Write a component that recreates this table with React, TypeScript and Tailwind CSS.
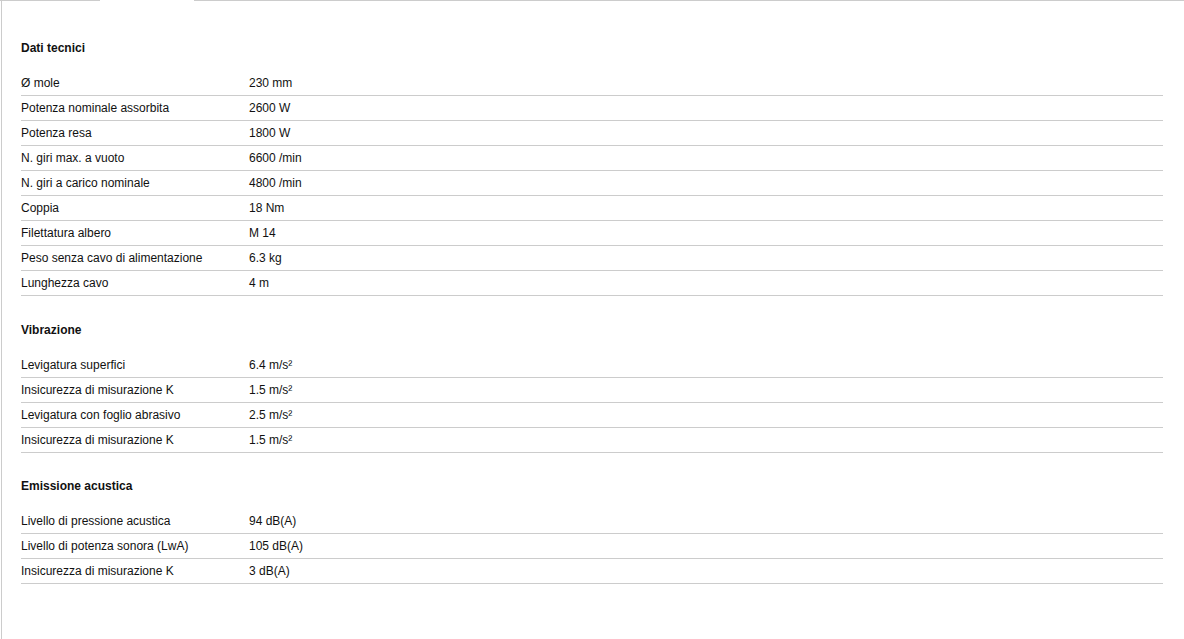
import React from 'react'

type Row = { label: string; value: string }
type Section = { title: string; gap: string; rows: Row[] }

const sections: Section[] = [
  {
    title: 'Dati tecnici',
    gap: 'pt-0',
    rows: [
      { label: 'Ø mole', value: '230 mm' },
      { label: 'Potenza nominale assorbita', value: '2600 W' },
      { label: 'Potenza resa', value: '1800 W' },
      { label: 'N. giri max. a vuoto', value: '6600 /min' },
      { label: 'N. giri a carico nominale', value: '4800 /min' },
      { label: 'Coppia', value: '18 Nm' },
      { label: 'Filettatura albero', value: 'M 14' },
      { label: 'Peso senza cavo di alimentazione', value: '6.3 kg' },
      { label: 'Lunghezza cavo', value: '4 m' },
    ],
  },
  {
    title: 'Vibrazione',
    gap: 'pt-[26px]',
    rows: [
      { label: 'Levigatura superfici', value: '6.4 m/s²' },
      { label: 'Insicurezza di misurazione K', value: '1.5 m/s²' },
      { label: 'Levigatura con foglio abrasivo', value: '2.5 m/s²' },
      { label: 'Insicurezza di misurazione K', value: '1.5 m/s²' },
    ],
  },
  {
    title: 'Emissione acustica',
    gap: 'pt-[25px]',
    rows: [
      { label: 'Livello di pressione acustica', value: '94 dB(A)' },
      { label: 'Livello di potenza sonora (LwA)', value: '105 dB(A)' },
      { label: 'Insicurezza di misurazione K', value: '3 dB(A)' },
    ],
  },
]

export default function App() {
  return (
    <div className="relative min-h-[639px] bg-white text-[12px] text-[#111] font-['Liberation_Sans',Arial,sans-serif]">
      {/* tab strip: active tab leaves a gap in the top border */}
      <div className="flex h-px">
        <div className="w-[100px] bg-[#cccccc]" />
        <div className="w-[94px]" />
        <div className="flex-1 bg-[#cccccc]" />
      </div>

      <div className="ml-px min-h-[638px] border-l border-[#cccccc] pl-[19px] pr-[21px] pt-[39px]">
        {sections.map((section) => (
          <div key={section.title} className={section.gap}>
            <h3 className="h-4 leading-4 font-bold">{section.title}</h3>
            <div className="mt-[15px]">
              {section.rows.map((row, j) => (
                <div key={j} className="flex h-[25px] items-center border-b border-[#cccccc]">
                  <div className="w-[228px] shrink-0">{row.label}</div>
                  <div>{row.value}</div>
                </div>
              ))}
            </div>
          </div>
        ))}
      </div>
    </div>
  )
}
